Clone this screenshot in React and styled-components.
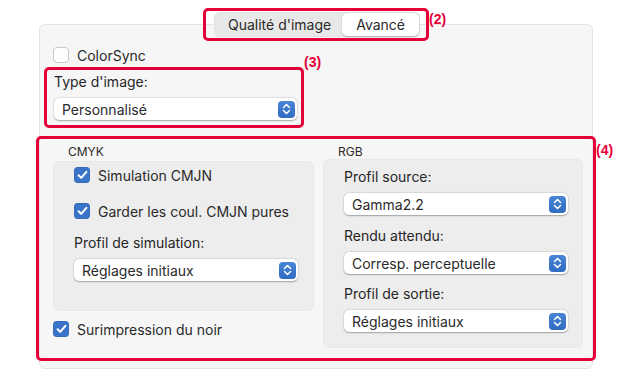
import styled, { createGlobalStyle } from "styled-components";

const GlobalStyle = createGlobalStyle`
	html, body {
		margin: 0;
		padding: 0;
		background: #ffffff;
	}
	body {
		font-family: Inter, "Liberation Sans", sans-serif;
		font-size: 14px;
		color: #262626;
	}
`;

function Chevrons() {
	return (
		<svg width="9" height="12" viewBox="0 0 9 12" fill="none">
			<path d="M1.5 4.5 L4.5 1.5 L7.5 4.5" stroke="#fff" strokeWidth="1.5" strokeLinecap="round" strokeLinejoin="round" />
			<path d="M1.5 7.5 L4.5 10.5 L7.5 7.5" stroke="#fff" strokeWidth="1.5" strokeLinecap="round" strokeLinejoin="round" />
		</svg>
	);
}

function Check({ checked }) {
	return (
		<Box $checked={checked}>
			{checked && (
				<svg width="11" height="10" viewBox="0 0 11 10" fill="none">
					<path d="M1.6 5.2 L4.2 7.9 L9.4 1.8" stroke="#fff" strokeWidth="2" strokeLinecap="round" strokeLinejoin="round" />
				</svg>
			)}
		</Box>
	);
}

function Select({ value, width }) {
	return (
		<SelectBox $width={width}>
			<span>{value}</span>
			<Arrow>
				<Chevrons />
			</Arrow>
		</SelectBox>
	);
}

export default function App() {
	return (
		<Page>
			<GlobalStyle />
			<TabsBar>
				<Marked $pad="1px 6px 1px 8px">
					<Segment>
						<Tab $pad="0 11px 0 14px">Qualité d'image</Tab>
						<Tab $active>Avancé</Tab>
					</Segment>
					<Note $top="0px">(2)</Note>
				</Marked>
			</TabsBar>

			<Panel>
				<CheckRow $indent="13px">
					<Check />
					<span>ColorSync</span>
				</CheckRow>

				<Marked $pad="4px 4px 5px 7px" $ml="4px" $mt="4px" $w="260px">
					<Label>Type d'image:</Label>
					<Select value="Personnalisé" width="243px" />
					<Note $top="-16px">(3)</Note>
				</Marked>

				<Marked $pad="6px 10px 0 14px" $ml="-4px" $mt="8px" $w="560px" $h="225px">
					<Columns>
						<Column>
							<GroupTitle $mb="2px">CMYK</GroupTitle>
							<Group $pad="6px 16px 30px 21px">
								<CheckRow>
									<Check checked />
									<span>Simulation CMJN</span>
								</CheckRow>
								<CheckRow $mt="20px">
									<Check checked />
									<span>Garder les coul. CMJN pures</span>
								</CheckRow>
								<Label $mt="16px">Profil de simulation:</Label>
								<Select value="Réglages initiaux" />
							</Group>
							<CheckRow $mt="10px">
								<Check checked />
								<span>Surimpression du noir</span>
							</CheckRow>
						</Column>
						<Column>
							<GroupTitle>RGB</GroupTitle>
							<Group $pad="10px 15px 16px 21px">
								<Label>Profil source:</Label>
								<Select value="Gamma2.2" />
								<Label $mt="13px">Rendu attendu:</Label>
								<Select value="Corresp. perceptuelle" />
								<Label $mt="12px">Profil de sortie:</Label>
								<Select value="Réglages initiaux" />
							</Group>
						</Column>
					</Columns>
					<Note $top="3px">(4)</Note>
				</Marked>
			</Panel>
		</Page>
	);
}

const Page = styled.div`
	width: 632px;
	height: 381px;
	padding-top: 8px;
	box-sizing: border-box;
	overflow: hidden;
`;

const TabsBar = styled.div`
	position: relative;
	z-index: 1;
	margin-left: 39px;
	width: 554px;
	display: flex;
	justify-content: center;
`;

const Marked = styled.div`
	position: relative;
	box-sizing: border-box;
	border: 3px solid #e5003a;
	border-radius: 5px;
	padding: ${(p) => p.$pad || "0"};
	margin-left: ${(p) => p.$ml || "0"};
	margin-top: ${(p) => p.$mt || "0"};
	width: ${(p) => p.$w || "auto"};
	height: ${(p) => p.$h || "auto"};
`;

const Note = styled.span`
	position: absolute;
	left: calc(100% + 3px);
	top: ${(p) => p.$top};
	font-family: "Liberation Sans", Arial, sans-serif;
	font-weight: bold;
	font-size: 14px;
	line-height: 16px;
	color: #e5003a;
	white-space: nowrap;
`;

const Segment = styled.div`
	display: flex;
	align-items: center;
	height: 25px;
	padding: 0 1px 0 0;
	border-radius: 6px;
	background: #e8e8e8;
	box-shadow: inset 0 0 0 0.5px rgba(0, 0, 0, 0.06);
`;

const Tab = styled.div`
	height: 23px;
	display: flex;
	align-items: center;
	padding: ${(p) => p.$pad || "0 14px"};
	border-radius: 5px;
	color: #2a2a2a;
	background: ${(p) => (p.$active ? "#ffffff" : "transparent")};
	box-shadow: ${(p) => (p.$active ? "0 0.5px 1.5px rgba(0,0,0,0.25)" : "none")};
`;

const Panel = styled.div`
	margin-left: 39px;
	margin-top: -17px;
	width: 554px;
	height: 345px;
	box-sizing: border-box;
	padding-top: 22px;
	background: #f6f6f6;
	border: 1px solid #e4e4e4;
	border-radius: 6px;
`;

const CheckRow = styled.div`
	display: flex;
	align-items: center;
	gap: 8px;
	height: 16px;
	margin-left: ${(p) => p.$indent || "0"};
	margin-top: ${(p) => p.$mt || "0"};
	color: #2a2a2a;
	white-space: nowrap;
`;

const Box = styled.div`
	width: 16px;
	height: 16px;
	box-sizing: border-box;
	border-radius: 4px;
	display: flex;
	align-items: center;
	justify-content: center;
	background: ${(p) => (p.$checked ? "#3a74c9" : "#ffffff")};
	border: ${(p) => (p.$checked ? "none" : "1px solid #c9c9c9")};
	box-shadow: ${(p) => (p.$checked ? "inset 0 0 0 0.5px rgba(0,0,0,0.15)" : "none")};
`;

const Label = styled.div`
	line-height: 16px;
	margin-top: ${(p) => p.$mt || "0"};
	margin-bottom: 8px;
	color: #262626;
`;

const SelectBox = styled.div`
	width: ${(p) => p.$width || "auto"};
	height: 22px;
	box-sizing: border-box;
	display: flex;
	align-items: center;
	justify-content: space-between;
	padding: 0 2px 0 8px;
	background: #ffffff;
	border-radius: 5px;
	box-shadow: 0 0.5px 1.5px rgba(0, 0, 0, 0.3), 0 0 0 0.5px rgba(0, 0, 0, 0.06);
	color: #2a2a2a;
`;

const Arrow = styled.div`
	width: 17px;
	height: 17px;
	border-radius: 4px;
	background: linear-gradient(#4a86d6, #2f6bbf);
	display: flex;
	align-items: center;
	justify-content: center;
`;

const Columns = styled.div`
	display: grid;
	grid-template-columns: 261px 260px;
	column-gap: 9px;
	align-items: start;
`;

const Column = styled.div`
	display: flex;
	flex-direction: column;
`;

const GroupTitle = styled.div`
	font-size: 12px;
	line-height: 14px;
	margin: 0 0 ${(p) => p.$mb || "0"} 15px;
	color: #2a2a2a;
`;

const Group = styled.div`
	display: flex;
	flex-direction: column;
	padding: ${(p) => p.$pad};
	background: #ededed;
	border-radius: 6px;
	box-shadow: inset 0 0 0 0.5px rgba(0, 0, 0, 0.04);
`;
